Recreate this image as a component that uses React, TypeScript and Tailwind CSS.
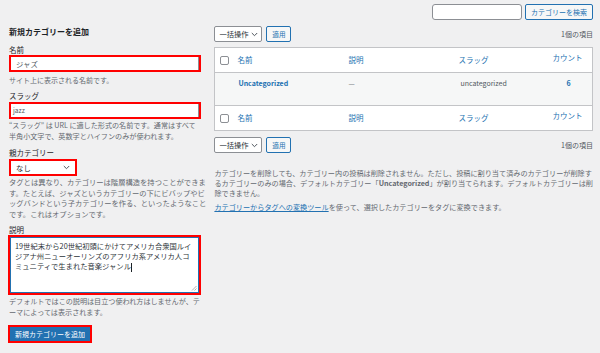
import React from "react";

const font = "font-['Noto_Sans_CJK_JP','Noto_Sans',sans-serif]";

function Chevron({ className = "" }: { className?: string }) {
  return (
    <svg width="7" height="5" viewBox="0 0 7 5" className={`shrink-0 ${className}`}>
      <path d="M0.8 1 L3.5 3.7 L6.2 1" fill="none" stroke="#50575e" strokeWidth="1" />
    </svg>
  );
}

function Checkbox() {
  return <span className="block w-[9px] h-[9px] border border-[#8c8f94] rounded-[2px] bg-white" />;
}

function BulkRow() {
  return (
    <div className="flex items-center h-[16px]">
      <div className="flex items-center justify-between w-[48px] h-[16px] bg-white border border-[#8c8f94] rounded-[2px] pl-[4px] pr-[3px] whitespace-nowrap">
        <span className="text-[7.3px] leading-[10px] text-[#2c3338] whitespace-nowrap">一括操作</span>
        <Chevron />
      </div>
      <button className="ml-[4px] w-[25px] h-[16px] border border-[#2271b1] bg-[#f6f7f7] rounded-[2px] text-[6.6px] leading-[10px] text-[#2271b1] flex items-center justify-center">
        適用
      </button>
      <span className="ml-auto text-[7px] leading-[10px] text-[#50575e]">1個の項目</span>
    </div>
  );
}

function HeadRow({ top }: { top: boolean }) {
  return (
    <div
      className={`grid grid-cols-[22px_111px_110px_94px_1fr] items-center h-[25px] ${
        top ? "border-b" : "border-t"
      } border-[#c3c4c7] text-[7.5px] leading-[10px] text-[#2271b1]`}
    >
      <div className="pl-[5px]">
        <Checkbox />
      </div>
      <span>名前</span>
      <span>説明</span>
      <span>スラッグ</span>
      <span className="mb-[5px]">カウント</span>
    </div>
  );
}

export default function App() {
  return (
    <div className={`w-[600px] h-[353px] bg-[#f0f0f1] flex overflow-hidden ${font}`}>
      {/* Left column */}
      <div className="w-[208px] pl-[8px] pt-[27px] flex flex-col">
        <h2 className="text-[8px] leading-[10px] font-bold text-[#1d2327] pl-[1px]">新規カテゴリーを追加</h2>

        <label className="mt-[8px] pl-[1px] text-[7.5px] leading-[10px] text-[#1d2327]">名前</label>
        <div className="ml-[1px] w-[192px] h-[17px] border-2 border-[#ff0000] bg-white flex items-center">
          <div className="flex-1 h-full flex items-center pl-[5px] border-r border-[#8c8f94] text-[7.4px] text-[#50575e]">
            ジャズ
          </div>
        </div>
        <p className="mt-[3px] pl-[1px] text-[7px] leading-[10px] text-[#646970] whitespace-nowrap">
          サイト上に表示される名前です。
        </p>

        <label className="mt-[6px] pl-[1px] text-[7.5px] leading-[10px] text-[#1d2327]">スラッグ</label>
        <div className="mt-[1px] ml-[1px] w-[192px] h-[17px] border-2 border-[#ff0000] bg-white flex items-center">
          <div className="flex-1 h-full flex items-center pl-[2px] border-r border-[#8c8f94] text-[6.6px] text-[#50575e]">
            jazz
          </div>
        </div>
        <p className="mt-[1px] pl-[1px] text-[7.1px] leading-[10.5px] text-[#646970] whitespace-nowrap">
          “スラッグ” は URL に適した形式の名前です。通常はすべて
          <br />
          半角小文字で、英数字とハイフンのみが使われます。
        </p>

        <label className="mt-[7px] pl-[1px] text-[7.5px] leading-[10px] text-[#1d2327]">親カテゴリー</label>
        <div className="mt-[1px] ml-[1px] w-[68px] h-[17px] border-2 border-[#ff0000] bg-white flex items-center justify-between pl-[5px] pr-[5px]">
          <span className="text-[7.4px] leading-[10px] text-[#2c3338]">なし</span>
          <Chevron />
        </div>
        <p className="mt-[1px] pl-[1px] text-[7.3px] leading-[10.5px] text-[#646970] whitespace-nowrap">
          タグとは異なり、カテゴリーは階層構造を持つことができま
          <br />
          す。たとえば、ジャズというカテゴリーの下にビバップやビ
          <br />
          ッグバンドという子カテゴリーを作る、といったようなこと
          <br />
          です。これはオプションです。
        </p>

        <label className="mt-[6px] pl-[1px] text-[7.5px] leading-[10px] text-[#1d2327]">説明</label>
        <div className="w-[193px] h-[60px] border-2 border-[#ff0000] bg-white">
          <div
            role="textbox"
            className="relative w-full h-full border border-[#2271b1] pl-[4px] pt-[3px] text-[7.3px] leading-[10px] text-[#2c3338] whitespace-nowrap"
          >
            19世紀末から20世紀初頭にかけてアメリカ合衆国ルイ
            <br />
            ジアナ州ニューオーリンズのアフリカ系アメリカ人コ
            <br />
            ミュニティで生まれた音楽ジャンル
            <span className="inline-block w-px h-[9px] bg-[#1d2327] align-middle" />
            <svg width="6" height="6" viewBox="0 0 6 6" className="absolute right-[1px] bottom-[1px]">
              <path d="M5.5 1 L1 5.5 M5.5 3.5 L3.5 5.5" stroke="#8c8f94" strokeWidth="0.7" />
            </svg>
          </div>
        </div>
        <p className="mt-[1px] pl-[1px] text-[7.1px] leading-[11px] text-[#646970] whitespace-nowrap">
          デフォルトではこの説明は目立つ使われ方はしませんが、テ
          <br />
          ーマによっては表示されます。
        </p>

        <div className="mt-[7px] w-[84px] h-[18px] border-2 border-[#ff0000] bg-white">
          <button className="w-full h-full bg-[#2271b1] text-white text-[7px] leading-[10px] flex items-center justify-center">
            新規カテゴリーを追加
          </button>
        </div>
      </div>

      {/* Right column */}
      <div className="flex-1 pl-[8px] pr-[10px] pt-[4px] flex flex-col">
        <div className="flex justify-end items-center h-[16px]">
          <div className="w-[90px] h-[16px] bg-white border border-[#8c8f94] rounded-[3px]" />
          <button className="ml-[3px] w-[68px] h-[16px] border border-[#2271b1] bg-[#f6f7f7] rounded-[2px] text-[7px] leading-[10px] text-[#2271b1] flex items-center justify-center">
            カテゴリーを検索
          </button>
        </div>

        <div className="mt-[6px]">
          <BulkRow />
        </div>

        <div className="mt-[5px] bg-white border border-[#c3c4c7]">
          <HeadRow top />
          <div className="grid grid-cols-[22px_111px_110px_94px_1fr] h-[32px] bg-[#f6f7f7] pt-[5px] text-[7px] leading-[10px]">
            <span />
            <span className="pl-[1px] font-bold text-[#2271b1]">Uncategorized</span>
            <span className="text-[#646970]">—</span>
            <span className="pl-[2px] text-[#50575e]">uncategorized</span>
            <span className="pl-[14px] font-bold text-[#2271b1]">6</span>
          </div>
          <HeadRow top={false} />
        </div>

        <div className="mt-[6px]">
          <BulkRow />
        </div>

        <p className="mt-[15px] text-[7.15px] leading-[10px] text-[#646970] whitespace-nowrap">
          カテゴリーを削除しても、カテゴリー内の投稿は削除されません。ただし、投稿に割り当て済みのカテゴリーが削除す
          <br />
          るカテゴリーのみの場合、デフォルトカテゴリー「<span className="font-bold">Uncategorized</span>」が割り当てられます。デフォルトカテゴリーは削
          <br />
          除できません。
        </p>
        <p className="mt-[4px] text-[7.15px] leading-[10px] text-[#646970] whitespace-nowrap">
          <a className="text-[#2271b1] underline">カテゴリーからタグへの変換ツール</a>
          を使って、選択したカテゴリーをタグに変換できます。
        </p>
      </div>
    </div>
  );
}
